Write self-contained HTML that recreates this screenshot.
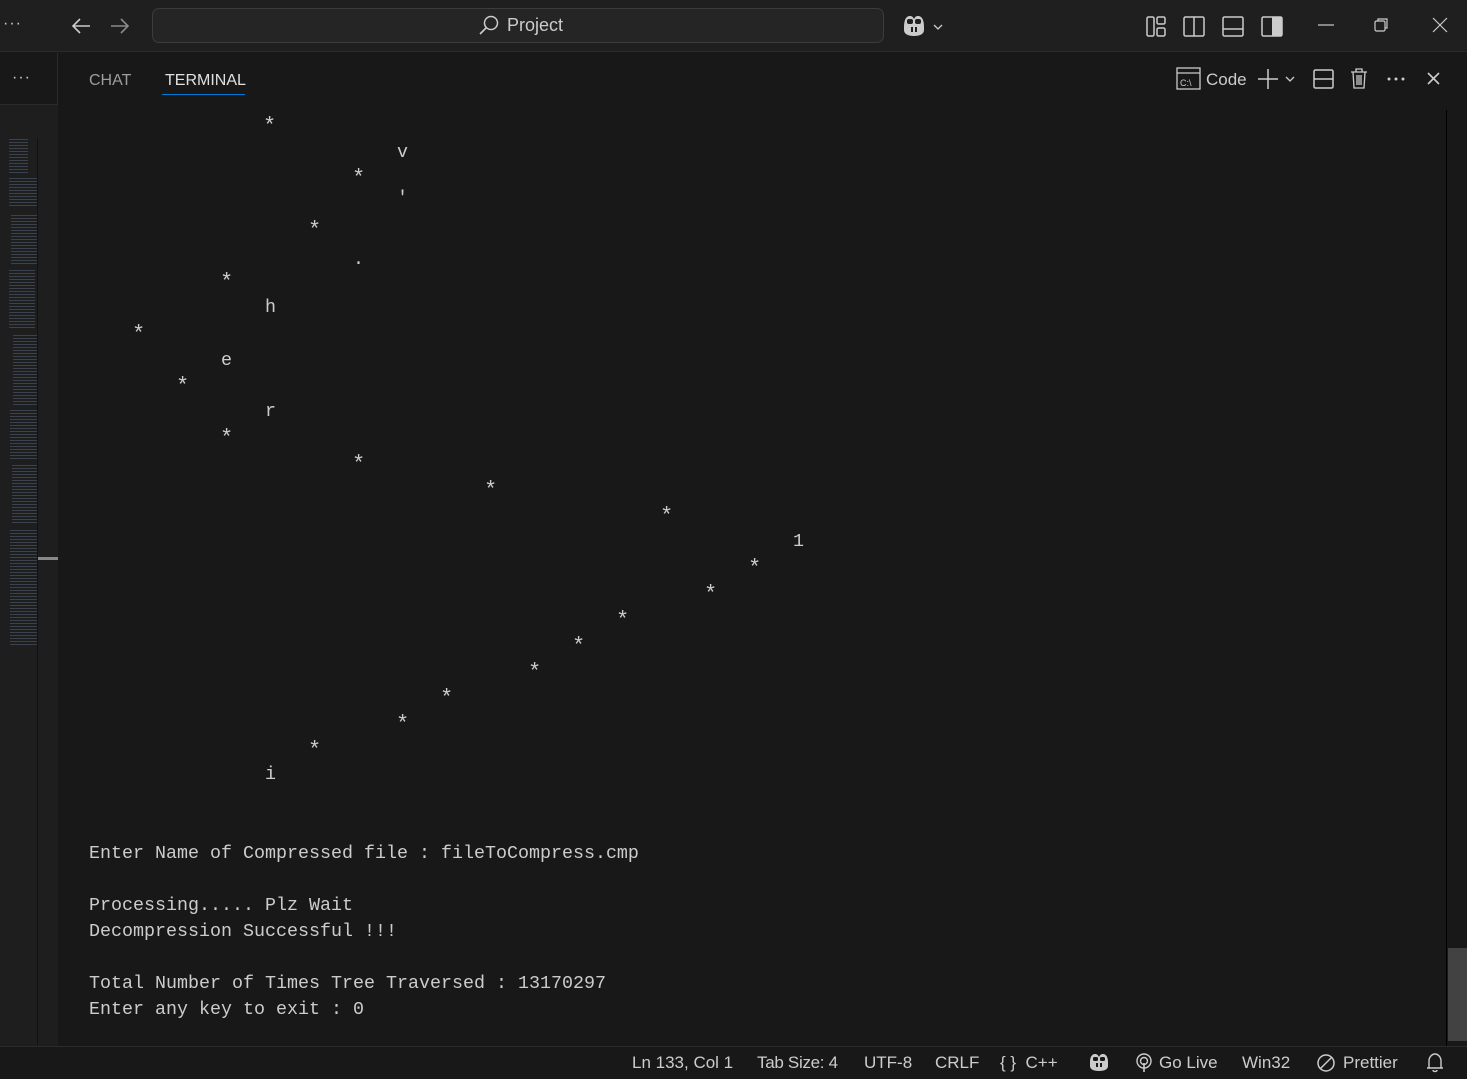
<!DOCTYPE html>
<html><head><meta charset="utf-8"><style>
*{margin:0;padding:0;box-sizing:border-box}
body{width:1467px;height:1079px;background:#181818;overflow:hidden;position:relative;font-family:"Liberation Sans",sans-serif;color:#ccc}
.a{position:absolute}
.t{position:absolute;font-family:"Liberation Mono",monospace;font-size:18.33px;line-height:26px;color:#cccccc;white-space:pre}
.s{font-size:22px}
.ui{font-family:"Liberation Sans",sans-serif;font-size:17px;color:#cccccc}
svg{position:absolute;overflow:visible}
.mm{position:absolute;background:repeating-linear-gradient(#5d6d8e 0 1px,transparent 1px 3px);opacity:.45}
</style></head><body>
<div class="a" style="left:0;top:0;width:1467px;height:52px;background:#1f1f1f;border-bottom:1px solid #2b2b2b"></div>
<div class="a ui" style="left:3px;top:15px;font-size:16px;letter-spacing:1px">···</div>
<svg style="left:70px;top:15px" width="24" height="22"><path d="M20 11H3M10 4L3 11L10 18" stroke="#ccc" stroke-width="1.6" fill="none"/></svg>
<svg style="left:108px;top:15px" width="24" height="22"><path d="M3 11H20M13 4L20 11L13 18" stroke="#8a8a8a" stroke-width="1.6" fill="none"/></svg>
<div class="a" style="left:152px;top:8px;width:732px;height:35px;background:#252526;border:1px solid #3c3c3c;border-radius:7px"></div>
<svg style="left:478px;top:15px" width="22" height="22"><circle cx="13" cy="8" r="6.5" stroke="#ccc" stroke-width="1.5" fill="none"/><path d="M8.5 12.5L2 19" stroke="#ccc" stroke-width="1.6"/></svg>
<div class="a ui" style="left:507px;top:15px;font-size:18px">Project</div>
<svg style="left:902px;top:14px" width="46" height="24"><path d="M2 13C2 6 4 2 8 2C10 2 11 3 12 5C13 3 14 2 16 2C20 2 22 6 22 13V16C22 20 18 22 12 22C6 22 2 20 2 16Z" fill="#ccc"/><rect x="5" y="5" width="6" height="5" rx="2" fill="#1f1f1f"/><rect x="13" y="5" width="6" height="5" rx="2" fill="#1f1f1f"/><rect x="9" y="13" width="2" height="5" fill="#1f1f1f"/><rect x="13" y="13" width="2" height="5" fill="#1f1f1f"/><path d="M32 11L36 15L40 11" stroke="#ccc" stroke-width="1.3" fill="none"/></svg>
<svg style="left:1145px;top:15px" width="145" height="24">
<rect x="2" y="2" width="7" height="19" rx="1.5" stroke="#ccc" stroke-width="1.5" fill="none"/><rect x="12" y="2" width="8" height="7" rx="1.5" stroke="#ccc" stroke-width="1.5" fill="none"/><rect x="12" y="13" width="8" height="8" rx="1.5" stroke="#ccc" stroke-width="1.5" fill="none"/>
<rect x="39" y="2" width="20" height="19" rx="1.5" stroke="#ccc" stroke-width="1.5" fill="none"/><path d="M49 2V21" stroke="#ccc" stroke-width="1.5"/>
<rect x="78" y="2" width="20" height="19" rx="1.5" stroke="#ccc" stroke-width="1.5" fill="none"/><path d="M78 14H98" stroke="#ccc" stroke-width="1.5"/>
<rect x="117" y="2" width="20" height="19" rx="1.5" stroke="#ccc" stroke-width="1.5" fill="none"/><rect x="127" y="2" width="10" height="19" fill="#ccc"/>
</svg>
<svg style="left:1316px;top:16px" width="140" height="20"><path d="M2 9H18" stroke="#ccc" stroke-width="1.2"/><rect x="59" y="5" width="10" height="10" rx="1.5" stroke="#ccc" stroke-width="1.2" fill="none"/><path d="M62 5V3H71V12H69" stroke="#ccc" stroke-width="1.2" fill="none"/><path d="M117 2L131 16M131 2L117 16" stroke="#ccc" stroke-width="1.2"/></svg>
<div class="a" style="left:0;top:53px;width:58px;height:993px;background:#181818;border-right:1px solid #2b2b2b"></div>
<div class="a ui" style="left:12px;top:69px;font-size:16px;letter-spacing:1px">···</div>
<div class="a" style="left:0;top:104px;width:58px;height:1px;background:#2b2b2b"></div>
<div class="a" style="left:0;top:105px;width:58px;height:941px;background:#1e1e1e"></div>
<div class="a" style="left:37px;top:138px;width:1px;height:908px;background:#111"></div>
<div class="a" style="left:38px;top:557px;width:20px;height:3px;background:#888"></div>
<div class="mm" style="left:9px;top:139px;width:19px;height:36px"></div>
<div class="mm" style="left:9px;top:178px;width:28px;height:30px"></div>
<div class="mm" style="left:11px;top:215px;width:26px;height:50px"></div>
<div class="mm" style="left:9px;top:270px;width:26px;height:60px"></div>
<div class="mm" style="left:13px;top:335px;width:24px;height:70px"></div>
<div class="mm" style="left:10px;top:410px;width:27px;height:50px"></div>
<div class="mm" style="left:12px;top:465px;width:25px;height:60px"></div>
<div class="mm" style="left:10px;top:530px;width:27px;height:115px"></div>
<div class="a ui" style="left:89px;top:72px;font-size:16px;color:#9d9d9d">CHAT</div>
<div class="a ui" style="left:165px;top:72px;font-size:16px;color:#e0e0e0">TERMINAL</div>
<div class="a" style="left:162px;top:94px;width:83px;height:1px;background:#0078d4"></div>
<svg style="left:1176px;top:67px" width="26" height="24"><rect x="1" y="1" width="23" height="21" stroke="#ccc" stroke-width="1.3" fill="none"/><path d="M1 6H24" stroke="#ccc" stroke-width="1.3"/><text x="4" y="19" font-size="9" fill="#ccc" font-family="Liberation Sans">C:\</text></svg>
<div class="a ui" style="left:1206px;top:70px;font-size:17px">Code</div>
<svg style="left:1257px;top:68px" width="210" height="22">
<path d="M11 1V21M1 11H21" stroke="#ccc" stroke-width="1.5"/><path d="M29 9L33 13L37 9" stroke="#ccc" stroke-width="1.3" fill="none"/>
<rect x="57" y="2" width="19" height="18" rx="1.5" stroke="#ccc" stroke-width="1.5" fill="none"/><path d="M57 11H76" stroke="#ccc" stroke-width="1.5"/>
<path d="M94 4H110M99 4V1H105V4M96 4L97 20H107L108 4M100 7V17M102 7V17M104 7V17" stroke="#ccc" stroke-width="1.3" fill="none"/>
<circle cx="132" cy="11" r="1.5" fill="#ccc"/><circle cx="139" cy="11" r="1.5" fill="#ccc"/><circle cx="146" cy="11" r="1.5" fill="#ccc"/>
<path d="M171 5L182 16M182 5L171 16" stroke="#ccc" stroke-width="1.6"/>
</svg>
<div class="a" style="left:1446px;top:110px;width:1px;height:936px;background:#000"></div>
<div class="a" style="left:1448px;top:948px;width:19px;height:93px;background:#424242"></div>
<div class="t s" style="left:263px;top:114px">*</div>
<div class="t" style="left:397px;top:140px">v</div>
<div class="t s" style="left:352px;top:166px">*</div>
<div class="t" style="left:397px;top:186px">'</div>
<div class="t s" style="left:308px;top:218px">*</div>
<div class="t" style="left:353px;top:247px">.</div>
<div class="t s" style="left:220px;top:270px">*</div>
<div class="t" style="left:265px;top:295px">h</div>
<div class="t s" style="left:132px;top:322px">*</div>
<div class="t" style="left:221px;top:348px">e</div>
<div class="t s" style="left:176px;top:374px">*</div>
<div class="t" style="left:265px;top:399px">r</div>
<div class="t s" style="left:220px;top:426px">*</div>
<div class="t s" style="left:352px;top:452px">*</div>
<div class="t s" style="left:484px;top:478px">*</div>
<div class="t s" style="left:660px;top:504px">*</div>
<div class="t" style="left:793px;top:529px">1</div>
<div class="t s" style="left:748px;top:556px">*</div>
<div class="t s" style="left:704px;top:582px">*</div>
<div class="t s" style="left:616px;top:608px">*</div>
<div class="t s" style="left:572px;top:634px">*</div>
<div class="t s" style="left:528px;top:660px">*</div>
<div class="t s" style="left:440px;top:686px">*</div>
<div class="t s" style="left:396px;top:712px">*</div>
<div class="t s" style="left:308px;top:738px">*</div>
<div class="t" style="left:265px;top:762px">i</div>
<div class="t" style="left:89px;top:841px">Enter Name of Compressed file : fileToCompress.cmp

Processing..... Plz Wait
Decompression Successful !!!

Total Number of Times Tree Traversed : 13170297
Enter any key to exit : 0</div>
<div class="a" style="left:0;top:1046px;width:1467px;height:33px;background:#181818;border-top:1px solid #2b2b2b"></div>
<div class="a ui" style="left:632px;top:1053px;font-size:17px">Ln 133, Col 1</div>
<div class="a ui" style="left:757px;top:1053px;font-size:17px;letter-spacing:-0.3px">Tab Size: 4</div>
<div class="a ui" style="left:864px;top:1053px;font-size:17px">UTF-8</div>
<div class="a ui" style="left:935px;top:1053px;font-size:17px">CRLF</div>
<div class="a ui" style="left:1000px;top:1053px;font-size:17px">{ }&nbsp; C++</div>
<svg style="left:1088px;top:1052px" width="22" height="22"><path d="M2 10C2 5 4 2 7 2C9 2 10 3 11 5C12 3 13 2 15 2C18 2 20 5 20 10V14C20 17 17 19 11 19C5 19 2 17 2 14Z" fill="#ccc"/><rect x="5" y="5" width="5" height="4" rx="1.5" fill="#181818"/><rect x="12" y="5" width="5" height="4" rx="1.5" fill="#181818"/><rect x="8" y="11" width="2" height="4" fill="#181818"/><rect x="12" y="11" width="2" height="4" fill="#181818"/></svg>
<svg style="left:1134px;top:1052px" width="22" height="22"><circle cx="10" cy="9" r="7" stroke="#ccc" stroke-width="1.4" fill="none"/><circle cx="10" cy="9" r="3.5" stroke="#ccc" stroke-width="1.4" fill="none"/><path d="M10 11V20" stroke="#ccc" stroke-width="1.6"/></svg>
<div class="a ui" style="left:1159px;top:1053px;font-size:17px">Go Live</div>
<div class="a ui" style="left:1242px;top:1053px;font-size:17px">Win32</div>
<svg style="left:1316px;top:1052px" width="22" height="22"><circle cx="10" cy="11" r="8" stroke="#ccc" stroke-width="1.5" fill="none"/><path d="M4 17L16 5" stroke="#ccc" stroke-width="1.5"/></svg>
<div class="a ui" style="left:1343px;top:1053px;font-size:17px">Prettier</div>
<svg style="left:1425px;top:1051px" width="22" height="24"><path d="M4 17V10C4 6 7 3 10 3C13 3 16 6 16 10V17H4ZM2 17H18M8 19C8 21 12 21 12 19" stroke="#ccc" stroke-width="1.4" fill="none"/></svg>
</body></html>
